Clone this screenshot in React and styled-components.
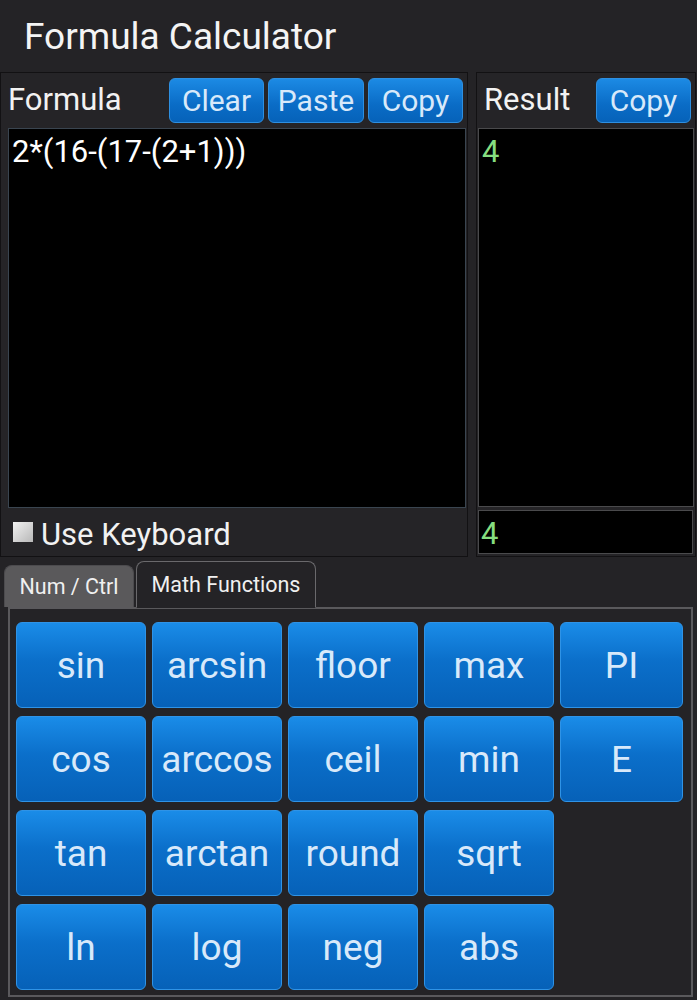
import styled, { createGlobalStyle } from "styled-components";

const GlobalStyle = createGlobalStyle`
  * { box-sizing: border-box; }
  body {
    margin: 0;
    background: #242326;
    font-family: Roboto, "Noto Sans", sans-serif;
    color: #f2f2f2;
  }
`;

const Screen = styled.div`
  width: 697px;
  height: 1000px;
  display: flex;
  flex-direction: column;
  background: #242326;
  overflow: hidden;
`;

const TitleBar = styled.header`
  height: 72px;
  display: flex;
  align-items: center;
  padding: 2px 0 0 24px;
  font-size: 37px;
  color: #f4f4f4;
`;

const TopRow = styled.div`
  display: flex;
  gap: 8px;
  height: 487px;
  padding-right: 1px;
`;

const Panel = styled.section`
  display: flex;
  flex-direction: column;
  width: ${(p) => p.$width || "auto"};
  flex: ${(p) => (p.$width ? "none" : "1")};
  border: 1px solid #121113;
  background: #252427;
`;

const PanelHead = styled.div`
  height: 55px;
  display: flex;
  align-items: center;
  padding: 0 4px 0 7px;
  gap: 4px;
`;

const Label = styled.span`
  font-size: 31px;
  flex: 1;
  color: #f2f2f2;
  padding-bottom: 2px;
`;

const SmallButton = styled.button`
  height: 45px;
  width: ${(p) => p.$w}px;
  margin-top: 1px;
  border: 1px solid #2e8fe0;
  border-radius: 6px;
  background: linear-gradient(#1c8ae4, #0a6cc6 60%, #0662b9);
  color: #d8e9fa;
  font-family: Roboto, sans-serif;
  font-size: 30px;
  padding: 0;
`;

const Display = styled.div`
  flex: 1;
  margin: ${(p) => p.$margin};
  background: #000;
  border: 1px solid ${(p) => (p.$blue ? "#3a4550" : "#4a4a4c")};
  color: ${(p) => (p.$green ? "#86de80" : "#ffffff")};
  font-size: 31px;
  padding: ${(p) => (p.$small ? "6px 2px" : "6px 3px")};
  line-height: 34px;
`;

const KeyboardRow = styled.label`
  height: 48px;
  display: flex;
  align-items: center;
  gap: 8px;
  padding: 4px 0 0 12px;
  font-size: 31px;
  color: #f2f2f2;
`;

const Box = styled.span`
  width: 20px;
  height: 20px;
  margin-top: -4px;
  background: linear-gradient(135deg, #f2f2f2, #b8b8b8);
`;

const ResultFoot = styled.div`
  height: 49px;
  display: flex;
  padding: 3px 2px 2px 1px;
`;

const TabRow = styled.div`
  display: flex;
  align-items: flex-end;
  height: 50px;
  padding-left: 4px;
  gap: 2px;
  position: relative;
  z-index: 1;
`;

const Tab = styled.div`
  height: ${(p) => (p.$active ? "47px" : "42px")};
  width: ${(p) => p.$w}px;
  display: flex;
  align-items: center;
  justify-content: center;
  font-size: 21.5px;
  color: #f0f0f0;
  border-radius: 8px 8px 0 0;
  background: ${(p) => (p.$active ? "#242326" : "#5a595b")};
  border: 1px solid ${(p) => (p.$active ? "#6a696c" : "#4c4b4e")};
  border-bottom: ${(p) => (p.$active ? "1px solid #242326" : "none")};
  margin-bottom: ${(p) => (p.$active ? "-1px" : "0")};
`;

const Keypad = styled.div`
  margin: 0 4px 3px 8px;
  flex: 1;
  border: 2px solid #5a595c;
  padding: 13px 0 5px 6px;
  display: grid;
  grid-template-columns: 130px 130px 130px 130px 123px;
  grid-auto-rows: 86px;
  column-gap: 6px;
  row-gap: 8px;
`;

const Key = styled.button`
  border: 1px solid #2f93e6;
  border-radius: 6px;
  background: linear-gradient(#1a8ce8, #0b6fca 45%, #0661b8);
  color: #d8e9fa;
  font-family: Roboto, sans-serif;
  font-size: 37px;
  padding: 2px 0 0;
`;

const keys = [
  "sin", "arcsin", "floor", "max", "PI",
  "cos", "arccos", "ceil", "min", "E",
  "tan", "arctan", "round", "sqrt", null,
  "ln", "log", "neg", "abs", null,
];

export default function App() {
  return (
    <>
      <GlobalStyle />
      <Screen>
        <TitleBar>Formula Calculator</TitleBar>
        <TopRow>
          <Panel $width="468px">
            <PanelHead>
              <Label>Formula</Label>
              <SmallButton $w={95}>Clear</SmallButton>
              <SmallButton $w={96}>Paste</SmallButton>
              <SmallButton $w={95}>Copy</SmallButton>
            </PanelHead>
            <Display $blue $margin="0 1px 0 7px">
              2*(16-(17-(2+1)))
            </Display>
            <KeyboardRow>
              <Box />
              Use Keyboard
            </KeyboardRow>
          </Panel>
          <Panel>
            <PanelHead>
              <Label>Result</Label>
              <SmallButton $w={95}>Copy</SmallButton>
            </PanelHead>
            <Display $green $margin="0 1px 0 1px">
              4
            </Display>
            <ResultFoot>
              <Display $green $small $margin="0">
                4
              </Display>
            </ResultFoot>
          </Panel>
        </TopRow>
        <TabRow>
          <Tab $w={130}>Num / Ctrl</Tab>
          <Tab $active $w={180}>Math Functions</Tab>
        </TabRow>
        <Keypad>
          {keys.map((k, i) =>
            k ? <Key key={i}>{k}</Key> : <span key={i} />
          )}
        </Keypad>
      </Screen>
    </>
  );
}
